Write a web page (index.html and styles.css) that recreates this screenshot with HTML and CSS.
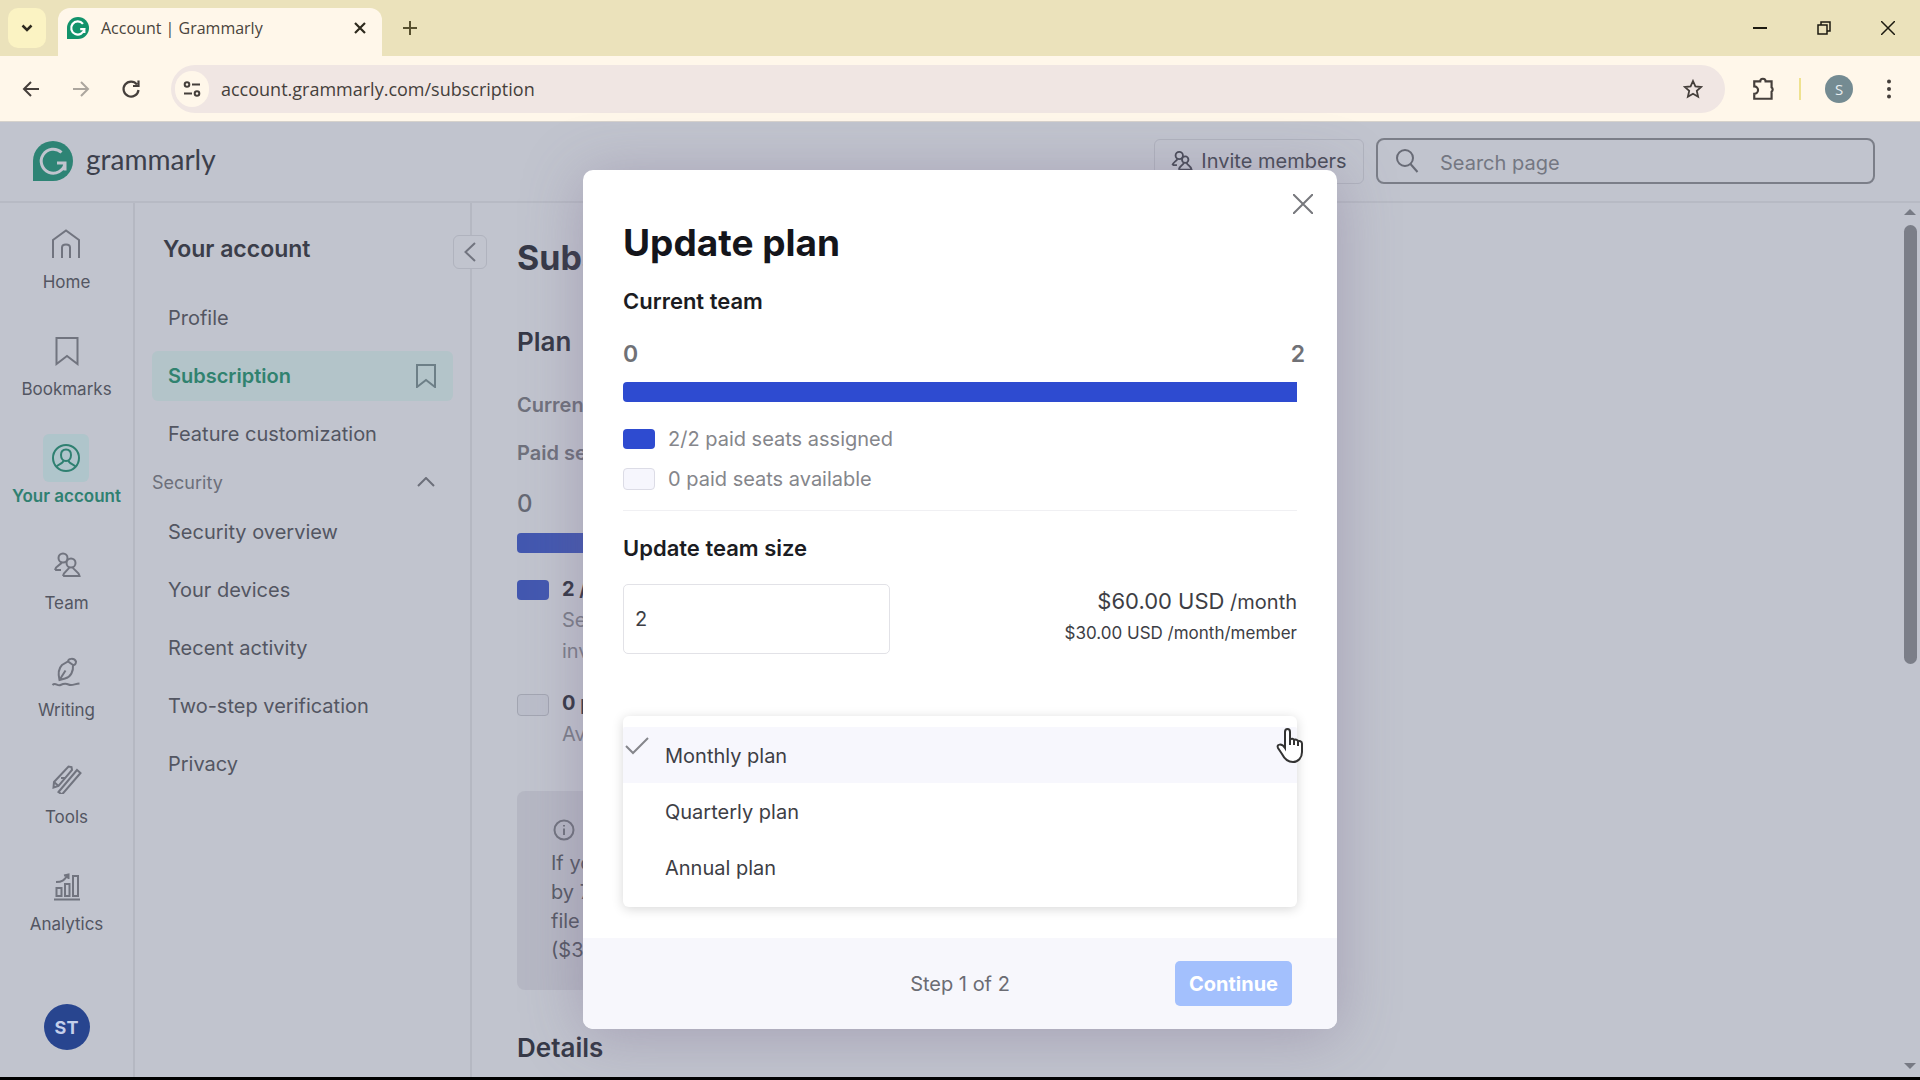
FILE: index.html
```html
<!DOCTYPE html>
<html lang="en">
<head>
  <meta charset="utf-8">
  <title>Account | Grammarly</title>
  <link rel="stylesheet" href="styles.css">
</head>
<body>
  <!-- browser window -->
  <div class="tab-strip">
    <button class="tab-search" aria-label="Search tabs">
      <svg width="12" height="8" viewBox="0 0 12 8"><path d="M1.500 1.500L6 6l4.500-4.500" stroke-width="2.500"/></svg>
    </button>
    <div class="tab">
      <svg class="favicon" width="22" height="22" viewBox="0 0 40 40"><path class="logo-shape" d="M20 0a20 20 0 1 1 0 40H0V20A20 20 0 0 1 20 0z"/><path class="logo-g" d="M29 12.500A12 12 0 1 0 31.500 22H24M31.500 22v7" stroke-width="4"/></svg>
      <span class="tab-title">Account | Grammarly</span>
      <button class="tab-close" aria-label="Close tab">
        <svg width="12" height="12" viewBox="0 0 12 12"><path d="M1 1l10 10M11 1L1 11" stroke-width="2.200"/></svg>
      </button>
    </div>
    <button class="new-tab" aria-label="New tab">
      <svg width="16" height="16" viewBox="0 0 16 16"><path d="M8 1v14M1 8h14" stroke-width="2"/></svg>
    </button>
    <div class="window-buttons">
      <button aria-label="Minimize"><svg width="14" height="14" viewBox="0 0 14 14"><path d="M0 7h14" stroke-width="2"/></svg></button>
      <button aria-label="Restore"><svg width="14" height="14" viewBox="0 0 14 14"><path d="M1 4h9v9H1zM4 4V1h9v9h-3" stroke-width="1.500"/></svg></button>
      <button aria-label="Close"><svg width="14" height="14" viewBox="0 0 14 14"><path d="M0 0l14 14M14 0L0 14" stroke-width="1.500"/></svg></button>
    </div>
  </div>
  <div class="toolbar">
    <button class="tool" aria-label="Back"><svg width="18" height="18" viewBox="0 0 18 18"><path d="M17 9H2M9 2L2 9l7 7" stroke-width="2"/></svg></button>
    <button class="tool tool-off" aria-label="Forward"><svg width="18" height="18" viewBox="0 0 18 18"><path d="M1 9h15M9 2l7 7-7 7" stroke-width="2"/></svg></button>
    <button class="tool" aria-label="Reload"><svg width="20" height="20" viewBox="0 0 20 20"><path d="M16 5.500A7.500 7.500 0 1 0 17.500 11M17.500 1.500v5.500H12" stroke-width="2.200"/></svg></button>
    <div class="address">
      <button class="site-info" aria-label="Site information"><svg width="18" height="18" viewBox="0 0 18 18"><circle cx="4" cy="4.500" r="2.300"/><path d="M9 4.500h8M1 13.500h8"/><circle cx="14" cy="13.500" r="2.300"/></svg></button>
      <input class="url" type="text" aria-label="Address" value="account.grammarly.com/subscription">
      <button class="star" aria-label="Bookmark this tab"><svg width="20" height="20" viewBox="0 0 20 20"><path d="M10 2l2.400 5.400 5.800.600-4.400 3.900 1.300 5.800-5.100-3-5.100 3 1.300-5.800L1.800 8l5.800-.600z" stroke-width="1.800"/></svg></button>
    </div>
    <button class="extensions" aria-label="Extensions"><svg width="26" height="26" viewBox="0 0 24 24"><path d="M3 5h5.500a2.500 2.500 0 0 1 5 0H19v5.500a2.500 2.500 0 0 1 0 4V21H3v-4.500a3.500 3.500 0 0 0 0-7z" stroke-width="2"/></svg></button>
    <span class="separator"></span>
    <button class="profile" aria-label="Profile">S</button>
    <button class="menu" aria-label="Menu"><svg width="6" height="20" viewBox="0 0 6 20"><circle cx="3" cy="2.500" r="2"/><circle cx="3" cy="10" r="2"/><circle cx="3" cy="17.500" r="2"/></svg></button>
  </div>

  <div class="page">
    <header class="header">
      <a class="logo" href="#">
        <svg width="40" height="40" viewBox="0 0 40 40"><path class="logo-shape" d="M20 0a20 20 0 1 1 0 40H0V20A20 20 0 0 1 20 0z"/><path class="logo-g" d="M28.500 11.500A12 12 0 1 0 32 22.500M24 22h8v7.500" stroke-width="3"/></svg>
        <span>grammarly</span>
      </a>
      <button class="invite">
        <svg width="22" height="22" viewBox="0 0 24 24"><circle cx="9" cy="6" r="4"/><circle cx="15.500" cy="10.500" r="3.500"/><path d="M1.500 16.500c1-3.500 3.500-3.500 5.500-6.500M1.500 16.500h5M8.500 21.500c1-5 4-4 5.500-7.500M17 14c1.500 3.500 4.500 2.500 5.500 7.500h-14"/></svg>
        Invite members
      </button>
      <div class="search">
        <svg width="26" height="26" viewBox="0 0 26 26"><circle cx="11" cy="10" r="8"/><path d="M16.500 16l7 8"/></svg>
        <input type="text" placeholder="Search page" aria-label="Search page">
      </div>
    </header>

    <div class="columns">
      <nav class="rail">
        <a href="#">
          <span class="rail-icon"><svg width="30" height="30" viewBox="0 0 30 30"><path d="M2 29V11L15 1.500 28 11v18M11 29V18.500c0-4 8-4 8 0V29"/></svg></span>
          Home
        </a>
        <a href="#">
          <span class="rail-icon"><svg width="30" height="30" viewBox="0 0 30 30"><path d="M4.500 2h21v26L15 20 4.500 28z"/></svg></span>
          Bookmarks
        </a>
        <a class="active" href="#">
          <span class="rail-icon"><svg width="30" height="30" viewBox="0 0 30 30"><circle cx="15" cy="15" r="13"/><path d="M15 6.500c3.300 0 5 2.500 5 5.500s-1.700 6-5 6-5-3-5-6 1.700-5.500 5-5.500zM12.500 17.500c0 3-5 3.500-7 6M17.500 17.500c0 3 5 3.500 7 6"/></svg></span>
          Your account
        </a>
        <a href="#">
          <span class="rail-icon"><svg width="30" height="30" viewBox="0 0 30 30"><circle cx="11" cy="8" r="4.500"/><circle cx="19" cy="13" r="4.500"/><path d="M3 20c1-5 5-4 7-8M3 20h6M11 26c1-5 5-5 6.500-9M20.500 17c1.500 4 6 4 7 9H11"/></svg></span>
          Team
        </a>
        <a href="#">
          <span class="rail-icon"><svg width="30" height="30" viewBox="0 0 30 30"><path d="M8.500 23C7 17 8 11 11 8l6-3.500 5 3.500c.500 6-2 12-8 13.500zM8.500 23l6-9.500M17 4.500c0-3 6-4 8 0 0 2-1 4-3 3.500M1.500 28c3-3 5 1.500 8 0s5-2 8-.500 6-.500 11-1"/></svg></span>
          Writing
        </a>
        <a href="#">
          <span class="rail-icon"><svg width="30" height="30" viewBox="0 0 30 30"><path d="M2 18L16.500 2.500l3 .500.500 3L6.500 22 1.500 23.500zM2 18l4.500 4M6.500 28L25 6l3.500 3L10 30.500zM9 14l4 0"/></svg></span>
          Tools
        </a>
        <a href="#">
          <span class="rail-icon"><svg width="30" height="30" viewBox="0 0 30 30"><path d="M2 28.500h26M4.500 17h5v8h-5zM13 13h4.500v12H13zM21 5h5v20h-5zM4 11c7 0 8-2 12-7M12 4.500l4.500-1v4.500"/></svg></span>
          Analytics
        </a>
        <button class="avatar" aria-label="Account menu">ST</button>
      </nav>

      <aside class="sidebar">
        <button class="collapse" aria-label="Collapse"><svg width="12" height="20" viewBox="0 0 12 20"><path d="M11 1L1.500 10l9.500 9"/></svg></button>
        <h2>Your account</h2>
        <a href="#">Profile</a>
        <a class="active" href="#">Subscription
          <svg width="22" height="24" viewBox="0 0 22 24"><path d="M2 1h18v22l-9-7-9 7z"/></svg>
        </a>
        <a href="#">Feature customization</a>
        <button class="group">Security
          <svg width="18" height="10" viewBox="0 0 18 10"><path d="M1 9l8-8 8 8"/></svg>
        </button>
        <a href="#">Security overview</a>
        <a href="#">Your devices</a>
        <a href="#">Recent activity</a>
        <a href="#">Two-step verification</a>
        <a href="#">Privacy</a>
      </aside>

      <main class="main">
        <h1>Subscription</h1>
        <h2>Plan</h2>
        <p class="field">Current plan</p>
        <p class="field">Paid seats</p>
        <p class="count">0</p>
        <div class="bar"></div>
        <div class="seats">
          <span class="swatch"></span>
          <div>
            <strong>2 / 2 paid</strong>
            <p>Seats<br>invited</p>
          </div>
        </div>
        <div class="seats">
          <span class="swatch empty"></span>
          <div>
            <strong>0 paid</strong>
            <p>Available</p>
          </div>
        </div>
        <div class="notice">
          <svg width="22" height="22" viewBox="0 0 22 22"><circle cx="11" cy="11" r="9.500"/><path d="M11 9.500V16M11 6v1.500"/></svg>
          <p>If you<br>by 7<br>file<br>($30.00</p>
        </div>
        <h2>Details</h2>
      </main>

      <div class="scrollbar">
        <span class="arrow up"></span>
        <span class="thumb"></span>
        <span class="arrow down"></span>
      </div>
    </div>

    <div class="overlay">
      <form class="modal">
        <button class="modal-close" type="button" aria-label="Close"><svg width="20" height="20" viewBox="0 0 20 20"><path d="M0 0l20 20M20 0L0 20"/></svg></button>
        <div class="modal-body">
          <h2>Update plan</h2>
          <h3>Current team</h3>
          <div class="scale"><span>0</span><span>2</span></div>
          <div class="bar"></div>
          <ul class="legend">
            <li><span class="swatch"></span>2/2 paid seats assigned</li>
            <li><span class="swatch empty"></span>0 paid seats available</li>
          </ul>
          <label class="size-label" for="teamSize">Update team size</label>
          <div class="size-row">
            <input type="text" id="teamSize" value="2">
            <div class="price">
              <p><span class="amount">$60.00 USD</span> /month</p>
              <p class="per-member">$30.00 USD /month/member</p>
            </div>
          </div>
          <div class="plans">
            <svg class="check" width="24" height="18" viewBox="0 0 24 18"><path d="M1 9l7 7L23 1"/></svg>
            <select size="3" aria-label="Billing plan">
              <option selected>Monthly plan</option>
              <option>Quarterly plan</option>
              <option>Annual plan</option>
            </select>
            <svg class="pointer" width="28" height="36" viewBox="0 0 28 36"><path d="M9 20V4c0-4 5-4 5 0v8c1-2 4-1.500 4 .500 1-1.500 4-1 4 1 1-1 4-.500 4 2V24c0 6-4 10-9 10-6 0-9-4-11-8l-4-6c-2-4 4-5 7 0zM14 12v5M18 13v4M22 14v4"/></svg>
          </div>
        </div>
        <footer class="modal-footer">
          <span>Step 1 of 2</span>
          <button type="button">Continue</button>
        </footer>
      </form>
    </div>
  </div>
</body>
</html>
```

FILE: styles.css
```css
* {
  box-sizing: border-box;
}
body {
  margin: 0;
  height: 100vh;
  display: flex;
  flex-direction: column;
  overflow: hidden;
  background-color: #000;
  font-family: Inter, "Liberation Sans", sans-serif;
  font-size: 20px;
  color: #535662;
}
h1, h2, h3, p, ul {
  margin: 0;
  padding: 0;
}
a {
  color: inherit;
  text-decoration: none;
}
button, input, select {
  font: inherit;
  color: inherit;
  border: none;
  padding: 0;
  background: none;
  outline: none;
}
button {
  display: flex;
  align-items: center;
  justify-content: center;
}
svg {
  flex: none;
  fill: none;
  stroke: currentColor;
  stroke-width: 2;
}

/* browser window */
.tab-strip {
  display: flex;
  height: 56px;
  padding: 8px 0 0 8px;
  background-color: #ebe2bb;
  color: #2e2a1e;
  font-family: "Open Sans", "Noto Sans", sans-serif;
}
.tab-search {
  width: 38px;
  height: 40px;
  border-radius: 10px;
  background-color: #fbf3c3;
}
.tab {
  display: flex;
  align-items: center;
  width: 324px;
  margin-left: 12px;
  padding: 0 16px 8px 9px;
  border-radius: 12px 12px 0 0;
  background-color: #fff7ea;
}
.logo-shape {
  fill: #2e8475;
  stroke: none;
}
.logo-g {
  stroke: #c1c4ce;
}
.favicon .logo-shape {
  fill: #12936b;
}
.favicon .logo-g {
  stroke: #fff;
}
.tab-title {
  flex: 1;
  margin-left: 12px;
  font-size: 16px;
  color: #4a443c;
}
.new-tab {
  width: 40px;
  height: 40px;
  margin-left: 8px;
  color: #57502e;
}
.window-buttons {
  display: flex;
  height: 40px;
  margin-left: auto;
  color: #1c1a10;
}
.window-buttons button {
  width: 64px;
}
.toolbar {
  display: flex;
  align-items: center;
  height: 66px;
  padding: 0 20px 0 6px;
  border-bottom: 1px solid #d6d2cc;
  background-color: #fff7ea;
  color: #453f3b;
  font-family: "Open Sans", "Noto Sans", sans-serif;
}
.tool {
  width: 50px;
  height: 40px;
}
.tool-off {
  color: #aca69e;
}
.address {
  display: flex;
  flex: 1;
  align-items: center;
  height: 48px;
  margin-left: 15px;
  padding: 0 22px 0 4px;
  border-radius: 24px;
  background-color: #f0e6e3;
}
.site-info {
  width: 34px;
  height: 36px;
  border-radius: 18px;
  background-color: #fff7ea;
}
.url {
  flex: 1;
  margin-left: 12px;
  font-size: 18px;
}
.extensions {
  margin-left: 26px;
}
.separator {
  width: 2px;
  height: 22px;
  margin: 0 24px 0 22px;
  background-color: #efe28f;
}
.profile {
  width: 28px;
  height: 28px;
  border-radius: 14px;
  background-color: #748b92;
  color: #e8eef0;
  font-size: 15px;
}
.menu {
  width: 22px;
  margin-left: 25px;
}
.menu circle {
  fill: currentColor;
  stroke: none;
}

/* account page */
.page {
  position: relative;
  display: flex;
  flex: 1;
  flex-direction: column;
  min-height: 0;
  margin-bottom: 3px;
  background-color: #c1c4ce;
}
.header {
  display: flex;
  align-items: center;
  height: 81px;
  padding: 0 45px 1px 33px;
  border-bottom: 2px solid #b7bac4;
}
.logo {
  display: flex;
  align-items: center;
  gap: 13px;
  margin-right: auto;
  color: #3c404c;
  font-family: Lato, sans-serif;
  font-size: 28px;
}
.logo span {
  padding-bottom: 4px;
}
.invite {
  gap: 8px;
  width: 210px;
  height: 45px;
  border: 1px solid #b0b3be;
  border-radius: 6px;
  color: #4a4d59;
  font-size: 20px;
}
.search {
  display: flex;
  align-items: center;
  gap: 20px;
  width: 499px;
  height: 46px;
  margin-left: 12px;
  padding: 0 16px;
  border: 2px solid #7b7e88;
  border-radius: 8px;
  color: #686b76;
}
.search input {
  width: 100%;
  padding-top: 3px;
}
.search input::placeholder {
  color: #747782;
}
.columns {
  display: flex;
  flex: 1;
  min-height: 0;
}
.rail {
  display: flex;
  flex-direction: column;
  align-items: center;
  width: 135px;
  padding-top: 17px;
  border-right: 2px solid #b5b8c2;
  font-size: 17px;
}
.rail a {
  display: flex;
  flex-direction: column;
  align-items: center;
  height: 107px;
  line-height: 24px;
  white-space: nowrap;
}
.rail-icon {
  display: flex;
  align-items: center;
  justify-content: center;
  width: 46px;
  height: 48px;
  margin-bottom: 2px;
  border-radius: 6px;
  color: #71747f;
}
.rail .active {
  color: #2f8071;
  font-weight: 600;
}
.rail .active .rail-icon {
  background-color: #afc5cb;
  color: #2f8071;
}
.avatar {
  width: 46px;
  height: 46px;
  margin-top: 35px;
  border-radius: 23px;
  background-color: #28458f;
  color: #c4cfea;
  font-size: 18px;
  font-weight: 700;
}
.sidebar {
  position: relative;
  width: 337px;
  padding: 30px 17px 0;
  border-right: 2px solid #b5b8c2;
}
.sidebar h2 {
  margin: 0 0 28px 11px;
  color: #3b3e4a;
  font-size: 23px;
  font-weight: 600;
  line-height: 32px;
}
.sidebar a {
  display: flex;
  align-items: center;
  justify-content: space-between;
  height: 50px;
  margin-bottom: 8px;
  padding: 0 16px;
  border-radius: 6px;
}
.sidebar .active {
  background-color: #b3c4c9;
  color: #30826f;
  font-weight: 600;
}
.sidebar .active svg {
  color: #6d7f87;
}
.collapse {
  position: absolute;
  top: 32px;
  right: -17px;
  width: 34px;
  height: 34px;
  border: 1px solid #b0b3be;
  border-radius: 6px;
  background-color: #c1c4ce;
  color: #71747f;
}
.group {
  justify-content: space-between;
  width: 100%;
  height: 30px;
  margin-bottom: 10px;
  padding-right: 18px;
  color: #6c6f7a;
  font-size: 18px;
}
.main {
  flex: 1;
  padding: 31px 0 0 45px;
  white-space: nowrap;
  overflow: hidden;
}
.main > * {
  max-width: 740px;
}
.main h1, .main h2 {
  color: #363947;
  font-weight: 700;
}
.main h1 {
  font-size: 34px;
  line-height: 48px;
}
.main h2 {
  margin-top: 42px;
  font-size: 26px;
  font-weight: 600;
  line-height: 36px;
}
.field {
  margin-top: 20px;
  color: #6f717c;
  font-weight: 600;
  line-height: 28px;
}
.main h2 + .field {
  margin-top: 31px;
}
.count {
  margin-top: 21px;
  color: #666974;
  font-size: 24px;
  font-weight: 500;
  line-height: 32px;
}
.bar {
  height: 20px;
  margin-top: 13px;
  border-radius: 4px 0 0 4px;
  background-color: #2e4bd0;
}
.swatch {
  flex: none;
  width: 32px;
  height: 20px;
  border-radius: 4px;
  background-color: #2e4bd0;
}
.main .bar, .main .swatch {
  background-color: #4358b0;
}
.seats {
  display: flex;
  gap: 13px;
  margin-top: 21px;
  color: #363947;
  line-height: 31px;
}
.seats .swatch {
  margin-top: 6px;
}
.seats p {
  color: #7c7f8a;
}
.swatch.empty, .main .swatch.empty {
  height: 22px;
  border: 1px solid #dcdce6;
  background-color: #f6f6fd;
}
.main .swatch.empty {
  border-color: #a3a6b2;
  background-color: #bbbeca;
}
.notice {
  margin-top: 41px;
  padding: 28px 34px 25px;
  border-radius: 8px;
  background-color: #b6b8c4;
  color: #575a66;
}
.notice svg {
  display: block;
  margin: 0 0 8px 2px;
  color: #71747f;
}
.notice p {
  line-height: 29px;
}
.notice + h2 {
  margin-top: 40px;
}
.scrollbar {
  display: flex;
  flex-direction: column;
  align-items: center;
  width: 20px;
  padding: 6px 0 8px;
}
.arrow {
  border: 6px solid transparent;
}
.up {
  border-top: none;
  border-bottom: 6px solid #777a84;
}
.down {
  margin-top: auto;
  border-bottom: none;
  border-top: 6px solid #777a84;
}
.thumb {
  width: 13px;
  height: 51%;
  margin-top: 10px;
  border-radius: 7px;
  background-color: #7b7e88;
}

/* update plan dialog */
.overlay {
  position: absolute;
  inset: 0;
  display: flex;
  align-items: center;
  justify-content: center;
}
.modal {
  position: relative;
  width: 754px;
  border-radius: 10px;
  background-color: #fff;
  color: #3d3e45;
  box-shadow: 0 6px 60px rgba(112, 92, 132, 0.35);
}
.modal-close {
  position: absolute;
  top: 24px;
  right: 24px;
  color: #77787d;
}
.modal-body {
  padding: 51px 40px 31px;
}
.modal h2 {
  color: #14151b;
  font-size: 37px;
  font-weight: 700;
  line-height: 44px;
}
.modal h3, .size-label {
  display: block;
  color: #1b1c22;
  font-size: 22px;
  font-weight: 600;
  line-height: 28px;
}
.modal h3 {
  margin-top: 22px;
}
.scale {
  display: flex;
  justify-content: space-between;
  margin: 23px -8px 0 0;
  color: #707176;
  font-size: 23px;
  font-weight: 600;
  line-height: 32px;
}
.scale + .bar {
  margin-top: 12px;
}
.legend {
  margin-top: 25px;
  padding-bottom: 19px;
  border-bottom: 1px solid #f0f0f3;
  color: #85868b;
  list-style: none;
}
.legend li {
  display: flex;
  align-items: center;
  gap: 13px;
  line-height: 24px;
}
.legend li + li {
  margin-top: 16px;
}
.size-label {
  margin: 23px 0 22px;
}
.size-row {
  display: flex;
  justify-content: space-between;
}
.size-row input {
  width: 267px;
  height: 70px;
  padding: 0 11px;
  border: 1px solid #e2e2e7;
  border-radius: 5px;
}
.price {
  text-align: right;
  line-height: 34px;
}
.amount {
  font-size: 22px;
}
.per-member {
  font-size: 17px;
  line-height: 28px;
}
.plans {
  position: relative;
  margin-top: 62px;
  padding: 11px 0 12px;
  border-radius: 6px;
  box-shadow: 0 2px 12px rgba(0, 0, 0, 0.16);
}
.plans select {
  display: block;
  width: 100%;
  height: 168px;
  overflow: hidden;
}
.plans option {
  height: 56px;
  padding: 17px 42px 15px;
}
.plans option:checked {
  background: linear-gradient(#f7f7fd, #f7f7fd);
  color: #3d3e45;
}
.check {
  position: absolute;
  top: 21px;
  left: 2px;
  color: #85868b;
}
.pointer {
  position: absolute;
  top: 12px;
  right: -7px;
  fill: #fff;
  stroke: #333;
}
.modal-footer {
  display: grid;
  grid-template-columns: 1fr auto 1fr;
  align-items: center;
  padding: 23px 45px;
  border-radius: 0 0 10px 10px;
  background-color: #f7f7fc;
  color: #6b6c73;
}
.modal-footer span {
  grid-column: 2;
}
.modal-footer button {
  justify-self: end;
  width: 117px;
  height: 45px;
  border-radius: 5px;
  background-color: #a3c0fd;
  color: #fff;
  font-weight: 700;
}
```
